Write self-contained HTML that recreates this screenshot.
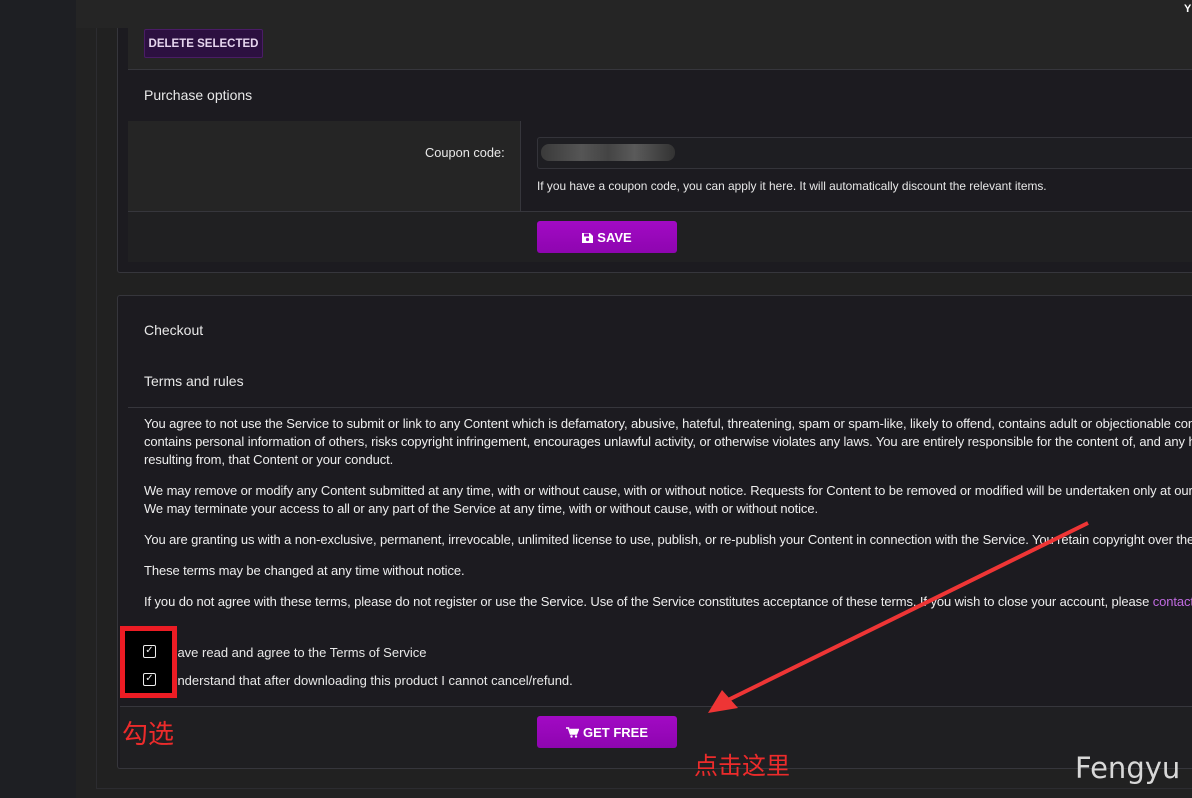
<!DOCTYPE html>
<html><head><meta charset="utf-8"><style>
*{margin:0;padding:0;box-sizing:border-box}
html,body{width:1192px;height:798px;overflow:hidden}
body{background:#222;font-family:"Liberation Sans",Arial,sans-serif;color:#e8e8e8;position:relative;font-size:13px}
.abs{position:absolute}
.btn{position:absolute;background:linear-gradient(#a20ac4,#8e05b0);border-radius:3px;color:#fff;font-weight:bold;font-size:13px;display:flex;align-items:center;justify-content:center;gap:4px}
.clip{position:absolute;left:0;top:0;width:1192px;height:798px;overflow:hidden}
p.t{position:absolute;left:144px;font-size:13px;line-height:18px;white-space:nowrap;color:#eee;letter-spacing:-0.1px}
.cb{position:absolute;width:13px;height:13px;border:1.5px solid #eee;border-radius:2px;font-size:10px;line-height:10px;text-align:center;color:#eee}
</style></head><body><div class="clip">
<div class="abs" style="left:0;top:0;width:76px;height:798px;background:#1e1f23"></div>
<div class="abs" style="left:96px;top:28px;width:1096px;height:761px;border-left:1px solid #2c2c30;border-bottom:1px solid #2c2c30;background:#212121"></div>
<div class="abs" style="left:117px;top:10px;width:1075px;height:263px;border:1px solid #36363c;border-right:none;border-radius:3px 0 0 3px;background:#1c1b20"></div>
<div class="abs" style="left:128px;top:28px;width:1064px;height:42px;background:#252525;border-bottom:1px solid #36363c"></div>
<div class="abs" style="left:76px;top:0;width:1116px;height:28px;background:#252525"></div>
<div class="abs" style="left:1184px;top:3px;font-size:11px;font-weight:bold;color:#fff">Y</div>
<div class="abs" style="left:144px;top:29px;width:119px;height:29px;background:#2c1040;border:1px solid #4a1c66;border-radius:2px;color:#e6d6ee;font-weight:bold;font-size:11.5px;display:flex;align-items:center;justify-content:center">DELETE SELECTED</div>
<div class="abs" style="left:144px;top:87px;font-size:14px">Purchase options</div>
<div class="abs" style="left:128px;top:121px;width:393px;height:90px;background:#252525;border-right:1px solid #36363c"></div>
<div class="abs" style="left:425px;top:145px;font-size:12.8px">Coupon code:</div>
<div class="abs" style="left:537px;top:137px;width:655px;height:32px;border:1px solid #34343a;border-right:none;border-radius:3px 0 0 3px;background:#1e1e22"></div>
<div class="abs" style="left:541px;top:144px;width:134px;height:17px;border-radius:8px;background:linear-gradient(90deg,#3a3a3a,#555 30%,#444 50%,#5a5a5a 70%,#333)"></div>
<div class="abs" style="left:537px;top:179px;font-size:11.9px">If you have a coupon code, you can apply it here. It will automatically discount the relevant items.</div>
<div class="abs" style="left:128px;top:211px;width:1064px;height:51px;background:#202022;border-top:1px solid #36363c"></div>
<div class="btn" style="left:537px;top:221px;width:140px;height:32px"><svg width="11" height="11" viewBox="0 0 11 11"><path d="M0 1h8l3 3v7H0z" fill="#fff"/><rect x="2" y="1.5" width="5" height="3" fill="#9a08bb"/><circle cx="5.5" cy="7.5" r="1.6" fill="#9a08bb"/></svg>SAVE</div>
<div class="abs" style="left:117px;top:295px;width:1075px;height:474px;border:1px solid #36363c;border-right:none;border-radius:3px 0 0 3px;background:#1c1b20"></div>
<div class="abs" style="left:144px;top:322px;font-size:14px">Checkout</div>
<div class="abs" style="left:144px;top:373px;font-size:14px">Terms and rules</div>
<div class="abs" style="left:128px;top:407px;width:1064px;height:1px;background:#36363c"></div>
<p class="t" style="top:415px">You agree to not use the Service to submit or link to any Content which is defamatory, abusive, hateful, threatening, spam or spam-like, likely to offend, contains adult or objectionable content,<br>contains personal information of others, risks copyright infringement, encourages unlawful activity, or otherwise violates any laws. You are entirely responsible for the content of, and any harm<br>resulting from, that Content or your conduct.</p>
<p class="t" style="top:482px">We may remove or modify any Content submitted at any time, with or without cause, with or without notice. Requests for Content to be removed or modified will be undertaken only at our discretion.<br>We may terminate your access to all or any part of the Service at any time, with or without cause, with or without notice.</p>
<p class="t" style="top:531px">You are granting us with a non-exclusive, permanent, irrevocable, unlimited license to use, publish, or re-publish your Content in connection with the Service. You retain copyright over the Content.</p>
<p class="t" style="top:562px">These terms may be changed at any time without notice.</p>
<p class="t" style="top:593px">If you do not agree with these terms, please do not register or use the Service. Use of the Service constitutes acceptance of these terms. If you wish to close your account, please <span style="color:#c06be0">contact us</span>.</p>
<div class="abs" style="left:163px;top:645px;font-size:13px">I have read and agree to the Terms of Service</div>
<div class="abs" style="left:163px;top:673px;font-size:13px">I understand that after downloading this product I cannot cancel/refund.</div>
<div class="abs" style="left:120px;top:706px;width:1072px;height:62px;background:#1f1f22;border-top:1px solid #36363c"></div>
<div class="btn" style="left:537px;top:716px;width:140px;height:32px"><svg width="13" height="11" viewBox="0 0 13 11"><path d="M0 1h2.5l2 6h6l1.8-4.5H4" fill="none" stroke="#fff" stroke-width="1.6"/><path d="M4 3h8l-1.6 4H5z" fill="#fff"/><circle cx="5.5" cy="9.5" r="1.2" fill="#fff"/><circle cx="10" cy="9.5" r="1.2" fill="#fff"/></svg>GET FREE</div>
<div class="abs" style="left:120px;top:626px;width:57px;height:72px;border:5px solid #ec1c24;background:#000"></div>
<div class="cb" style="left:143px;top:645px">✓</div>
<div class="cb" style="left:143px;top:673px">✓</div>
<div class="abs" style="left:122px;top:714px;font-size:26px;color:#ec2b2b;font-family:'Noto Sans CJK SC',sans-serif">勾选</div>
<div class="abs" style="left:694px;top:746px;font-size:24px;color:#ec2b2b;font-family:'Noto Sans CJK SC',sans-serif">点击这里</div>
<svg class="abs" style="left:0;top:0" width="1192" height="798"><line x1="1088" y1="523" x2="728" y2="700" stroke="#ee3535" stroke-width="4"/><path d="M708 713 L722 690 L738 708 Z" fill="#ee3535"/></svg>
<div class="abs" style="left:1075px;top:751px;font-size:29px;color:#d8d8d8;font-family:'DejaVu Sans',sans-serif">Fengyu</div>
</div></body></html>
